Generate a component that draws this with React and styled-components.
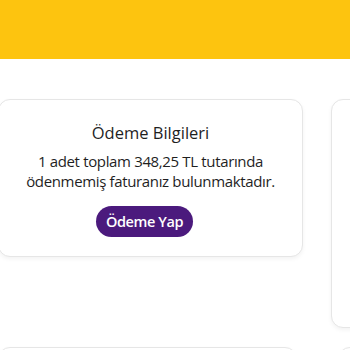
import styled, { createGlobalStyle } from 'styled-components';

const GlobalStyle = createGlobalStyle`
  html, body {
    margin: 0;
    padding: 0;
    background: #ffffff;
    overflow: hidden;
  }
  body {
    font-family: "Open Sans", "Noto Sans", sans-serif;
    color: #222;
  }
`;

const Header = styled.header`
  height: 59px;
  background: #fdc40f;
`;

const Main = styled.main`
  padding-top: 40px;
  margin-left: -2px;
  display: flex;
  flex-direction: column;
  gap: 19px;
`;

const Row = styled.div`
  display: flex;
  align-items: flex-start;
  gap: ${(p) => p.gap || 28}px;
`;

const Card = styled.section`
  flex: none;
  box-sizing: border-box;
  width: ${(p) => p.w}px;
  height: ${(p) => p.h}px;
  background: #fff;
  border: 1px solid #e6e6e6;
  border-radius: 12px;
  box-shadow: 0 2px 4px rgba(0, 0, 0, 0.05);
  display: flex;
  flex-direction: column;
  align-items: center;
  padding-top: 20px;
`;

const Title = styled.h2`
  margin: 0;
  font-size: 16.5px;
  font-weight: 400;
  line-height: 26px;
  color: #1f1f1f;
`;

const Text = styled.p`
  margin: 5px 0 0;
  font-size: 15px;
  letter-spacing: -0.35px;
  line-height: 20px;
  text-align: center;
  color: #1f1f1f;
`;

const PayButton = styled.button`
  margin: 15px 12px 0 0;
  height: 31px;
  padding: 0 10px;
  border: none;
  border-radius: 16px;
  background: #4b1a7d;
  color: #fff;
  font-family: inherit;
  font-size: 14.5px;
  font-weight: 600;
  letter-spacing: -0.4px;
  cursor: pointer;
`;

export default function App() {
  return (
    <>
      <GlobalStyle />
      <Header />
      <Main>
        <Row>
          <Card w={305} h={158}>
            <Title>Ödeme Bilgileri</Title>
            <Text>
              1 adet toplam 348,25 TL tutarında
              <br />
              ödenmemiş faturanız bulunmaktadır.
            </Text>
            <PayButton>Ödeme Yap</PayButton>
          </Card>
          <Card w={300} h={229} />
        </Row>
        <Row gap={41}>
          <Card w={299} h={200} />
          <Card w={300} h={200} />
        </Row>
      </Main>
    </>
  );
}
